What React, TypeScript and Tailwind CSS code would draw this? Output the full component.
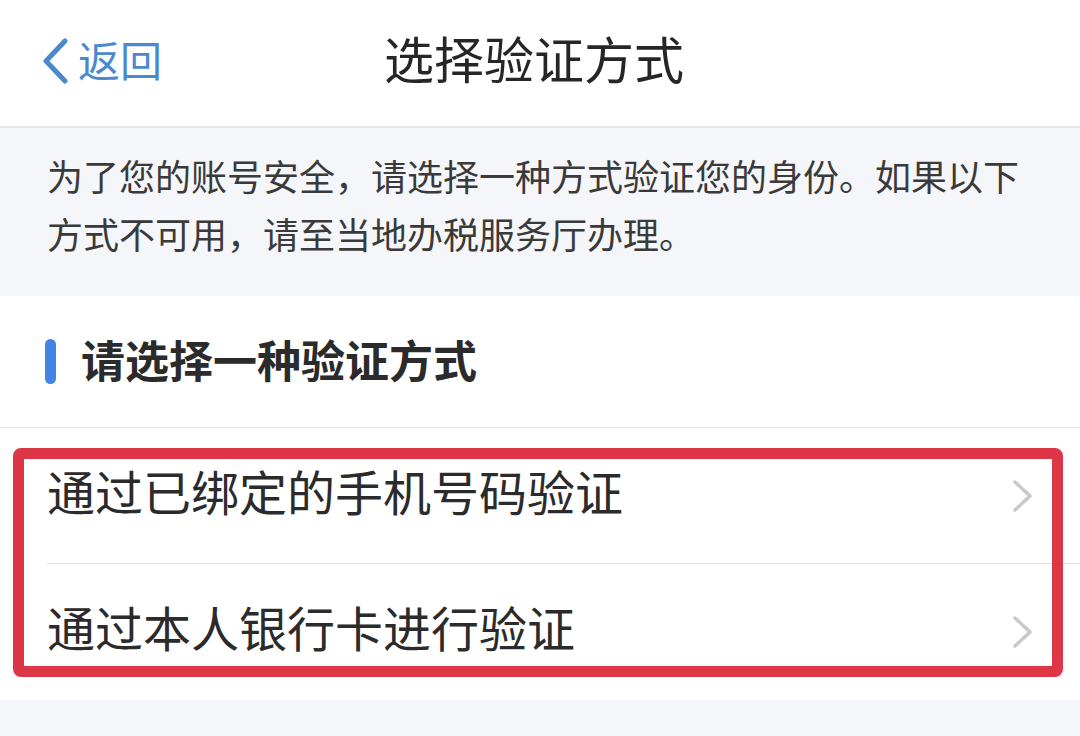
import React from "react";

const font = { fontFamily: '"Noto Sans CJK SC", "Noto Sans", sans-serif' };

function BackChevron() {
    return (
        <svg width="28" height="46" viewBox="0 0 28 46" fill="none">
            <path d="M23 3 L4 23 L23 43" stroke="#4b89cf" strokeWidth="5" strokeLinecap="round" strokeLinejoin="round" />
        </svg>
    );
}

function RowChevron() {
    return (
        <svg width="22" height="34" viewBox="0 0 22 34" fill="none">
            <path d="M3 3 L18 17 L3 31" stroke="#c9c9cd" strokeWidth="3.5" strokeLinecap="round" strokeLinejoin="round" />
        </svg>
    );
}

interface RowProps {
    label: string;
    divider?: boolean;
}

function OptionRow({ label, divider = false }: RowProps) {
    return (
        <div className="pl-[47px] bg-white">
            <div className={`flex items-center justify-between pr-[46px] ${divider ? "h-[137px] border-t border-[#e4e4e6]" : "h-[135px]"}`}>
                <span className="text-[48px] leading-none text-[#2b2b2b] mb-[12px]">{label}</span>
                <RowChevron />
            </div>
        </div>
    );
}

export default function App() {
    return (
        <div className="relative w-[1080px] h-[736px] overflow-hidden bg-[#f5f6f9] flex flex-col" style={font}>
            <header className="relative h-[128px] shrink-0 bg-white border-b-[2px] border-[#e3e5ea] flex items-center">
                <div className="absolute left-[42px] top-[38px] flex items-center gap-[8px]">
                    <BackChevron />
                    <span className="text-[42px] leading-none text-[#4b89cf] -mt-[4px]">返回</span>
                </div>
                <h1 className="w-full text-center text-[50px] leading-none text-[#262626] -mt-[12px] pr-[12px]">选择验证方式</h1>
            </header>

            <div className="h-[168px] shrink-0 bg-[#f5f6f9] px-[47px] pt-[18px]">
                <p className="text-[36px] leading-[58px] text-[#3a3a3a]">
                    为了您的账号安全，请选择一种方式验证您的身份。如果以下方式不可用，请至当地办税服务厅办理。
                </p>
            </div>

            <div className="h-[132px] shrink-0 bg-white border-b border-[#e6e6e8] flex items-center pl-[45px] gap-[25px]">
                <span className="w-[11px] h-[45px] rounded-full bg-[#4184e4]" />
                <span className="text-[44px] leading-none font-bold text-[#2b2b2b] mb-[6px]">请选择一种验证方式</span>
            </div>

            <OptionRow label="通过已绑定的手机号码验证" />
            <OptionRow label="通过本人银行卡进行验证" divider />

            <div className="flex-1 bg-[#f5f6f9]" />

            <div className="absolute left-[13px] top-[448px] w-[1050px] h-[229px] border-[11px] border-[#dd3747] rounded-[8px] pointer-events-none" />
        </div>
    );
}
